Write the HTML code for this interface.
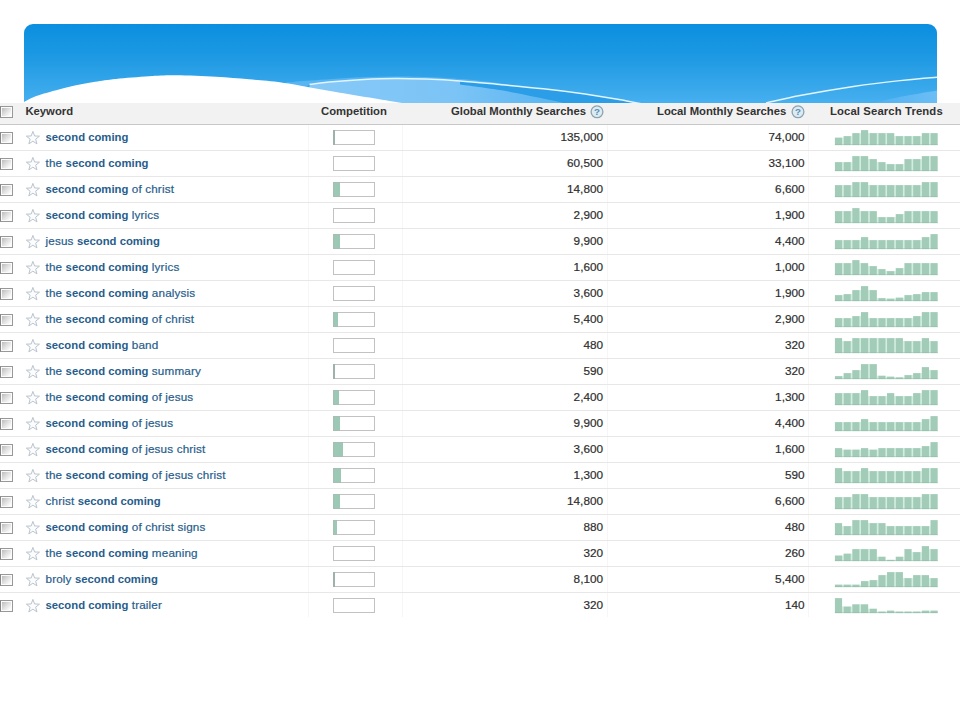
<!DOCTYPE html><html><head><meta charset="utf-8"><title>Keyword Ideas</title><style>
*{margin:0;padding:0;box-sizing:border-box}
html,body{width:960px;height:720px;background:#fff;overflow:hidden}
body{font-family:"Liberation Sans",sans-serif;font-size:11.3px;color:#333;position:relative}
#banner{position:absolute;left:24px;top:24px;width:913px;height:84px;border-radius:9px 9px 0 0;overflow:hidden;
 background:linear-gradient(#0b8fdf 0%,#1e99e3 40%,#45afef 92%)}
#banner svg{position:absolute;left:0;top:0}
#tbl{position:absolute;left:0;top:103px;width:960px;height:517px;background:#fff}
#hd{position:absolute;left:0;top:0;width:960px;height:22px;background:#f2f2f2;border-bottom:1px solid #c8c8c8;font-weight:bold;color:#333}
#hd span{position:absolute;top:1.2px;line-height:14px;white-space:nowrap}
#hd svg{position:absolute;left:0;top:0}
.r{position:absolute;left:0;width:960px;height:26px;border-bottom:1px solid #e7e7e7}
.r span{position:absolute;line-height:14px;white-space:nowrap}
.k{left:45.5px;top:4.9px;color:#265d8c;letter-spacing:0.15px;font-size:11.7px;-webkit-text-stroke:0.2px #265d8c}
.k b{font-weight:bold;letter-spacing:0;font-size:11.3px;-webkit-text-stroke:0}
.g,.l{top:4.9px;font-size:11.75px;text-align:right;color:#2e2e2e;-webkit-text-stroke:0.2px #2e2e2e}
.g{right:357px}
.l{right:155.5px}
.cb{position:absolute;left:0;width:13px;height:12.5px;border:1px solid #989898;border-left-color:#858585;background:#fbfbfb;padding:1px}
.cb::after{content:"";display:block;width:9px;height:8.5px;background:linear-gradient(135deg,#bcbcbc,#dedede 45%,#fcfcfc 90%)}
.cp{position:absolute;left:333px;top:5px;width:42px;height:15px;border:1px solid #c2c2c2;background:#fff}
.cp i{position:absolute;left:-1px;top:-1px;height:15px;background:#9cc9b5;border:1px solid #a9bdb5;border-right:0}
.cp i.s{background:#9db2aa;border:0}
.t{position:absolute;left:0;top:0}
.vs{position:absolute;top:22px;width:1px;height:492px;background:#f6f6f6}
</style></head><body>
<div id="banner"><svg width="913" height="84" viewBox="24 24 913 84">
<defs><linearGradient id="lg" x1="0" y1="0" x2="1" y2="0"><stop offset="0" stop-color="#86c9f7"/><stop offset="0.55" stop-color="#7cc4f6"/><stop offset="1" stop-color="#55b3f0"/></linearGradient>
<linearGradient id="lg2" x1="0" y1="0" x2="1" y2="0"><stop offset="0" stop-color="#4fb1f0"/><stop offset="1" stop-color="#6cbef5"/></linearGradient></defs>
<path d="M309.6,84.3 C313.4,83.9 323.5,82.5 332.5,81.7 C341.5,80.9 353.3,80.0 363.7,79.5 C374.1,79.0 384.6,78.6 395.0,78.5 C405.4,78.4 415.2,78.7 426.0,79.1 C436.8,79.5 447.4,80.0 460.0,80.9 C472.6,81.8 487.8,83.4 501.7,84.7 C515.6,86.0 529.4,87.2 543.3,88.8 C557.2,90.3 571.1,92.0 585.0,94.0 C598.9,96.0 616.7,99.2 626.7,100.9 C636.7,102.7 642.0,103.9 645.0,104.5 L645,108 L460,108 Z" fill="#2b9ee7"/>
<path d="M286.0,82.6 C290.0,82.3 302.2,81.2 310.0,80.6 C317.8,80.0 323.6,79.6 332.5,79.0 C341.4,78.4 353.3,77.6 363.7,77.2 C374.1,76.8 384.6,76.4 395.0,76.4 C405.4,76.4 413.5,76.4 426.0,77.0 C438.5,77.6 456.0,78.5 470.0,79.8 C484.0,81.1 503.3,83.8 510.0,84.6 L510.0,84.6 C508.6,84.6 510.0,85.3 501.7,84.7 C493.4,84.1 472.6,81.8 460.0,80.9 C447.4,80.0 436.8,79.5 426.0,79.1 C415.2,78.7 405.4,78.4 395.0,78.5 C384.6,78.6 374.1,79.0 363.7,79.5 C353.3,80.0 341.5,80.9 332.5,81.7 C323.5,82.5 313.4,83.9 309.6,84.3 L300,92 L286,92 Z" fill="#58b5f1"/>
<path d="M309.6,84.3 C313.4,83.9 323.5,82.5 332.5,81.7 C341.5,80.9 353.3,80.0 363.7,79.5 C374.1,79.0 384.6,78.6 395.0,78.5 C405.4,78.4 415.2,78.7 426.0,79.1 C436.8,79.5 454.3,80.6 460.0,80.9 L460.0,84.4 C466.9,85.4 487.9,88.0 501.7,90.3 C515.5,92.6 532.8,96.4 543.0,98.5 C553.2,100.6 558.2,101.8 563.0,103.0 C567.8,104.2 570.5,105.5 572.0,106.0 L309,108 Z" fill="url(#lg)"/>
<path d="M309.6,84.3 C313.4,83.9 323.5,82.5 332.5,81.7 C341.5,80.9 353.3,80.0 363.7,79.5 C374.1,79.0 384.6,78.6 395.0,78.5 C405.4,78.4 415.2,78.7 426.0,79.1 C436.8,79.5 447.4,80.0 460.0,80.9 C472.6,81.8 487.8,83.4 501.7,84.7 C515.6,86.0 529.4,87.2 543.3,88.8 C557.2,90.3 571.1,92.0 585.0,94.0 C598.9,96.0 616.7,99.2 626.7,100.9 C636.7,102.7 642.0,103.9 645.0,104.5" fill="none" stroke="#e4f4fd" stroke-width="1.5"/>
<path d="M873.0,103.0 C878.3,101.8 894.3,98.1 905.0,96.0 C915.7,93.9 931.7,91.3 937.0,90.4 L937,108 L873,108 Z" fill="url(#lg2)"/>
<path d="M766.0,103.0 C771.7,101.8 785.2,98.3 800.0,95.5 C814.8,92.7 838.3,88.7 855.0,86.2 C871.7,83.7 886.3,82.1 900.0,80.6 C913.7,79.1 930.8,77.8 937.0,77.3" fill="none" stroke="#e4f4fd" stroke-width="1.4"/>
<path d="M24.0,101.9 C25.3,101.2 28.8,99.2 31.6,97.9 C34.4,96.7 38.4,95.2 41.0,94.4 C43.6,93.6 44.1,93.7 47.2,92.8 C50.4,91.9 55.0,90.5 59.8,89.3 C64.5,88.0 70.1,86.5 76.0,85.3 C81.9,84.0 88.3,82.9 95.0,81.8 C101.7,80.7 107.0,79.8 116.0,78.9 C125.0,78.0 139.0,76.8 149.0,76.2 C159.0,75.6 164.8,75.2 176.0,75.3 C187.2,75.4 203.8,76.0 216.0,76.7 C228.2,77.4 237.9,78.3 249.0,79.3 C260.1,80.3 268.2,80.6 282.7,82.7 C297.2,84.8 316.6,88.7 336.0,92.0 C355.4,95.3 385.0,100.2 399.0,102.5 C413.0,104.8 416.5,105.4 420.0,106.0 L24,108 Z" fill="#fff"/>
</svg></div>
<div id="tbl">
<div id="hd"><div class="cb" style="top:2.8px"></div><svg width="960" height="22"><circle cx="597" cy="8.8" r="5.9" fill="#dcebf2" stroke="#8ba3b1" stroke-width="1.3"/><text x="597" y="12.100000000000001" font-family="Liberation Sans, sans-serif" font-size="9.8" font-weight="bold" fill="#5b8fb5" text-anchor="middle">?</text><circle cx="798" cy="8.8" r="5.9" fill="#dcebf2" stroke="#8ba3b1" stroke-width="1.3"/><text x="798" y="12.100000000000001" font-family="Liberation Sans, sans-serif" font-size="9.8" font-weight="bold" fill="#5b8fb5" text-anchor="middle">?</text></svg><span style="left:25.4px">Keyword</span><span style="left:321px">Competition</span><span style="left:451px">Global Monthly Searches</span><span style="left:657px">Local Monthly Searches</span><span style="left:830px;letter-spacing:0.12px">Local Search Trends</span></div>
<div class="vs" style="left:307.6px"></div>
<div class="vs" style="left:402px"></div>
<div class="vs" style="left:607px"></div>
<div class="vs" style="left:808px"></div>
<div class="r" style="top:22px"><div class="cb" style="top:6.7px"></div><svg class="t" width="960" height="26"><path d="M32.90,6.40 L34.60,10.96 L39.46,11.17 L35.66,14.20 L36.96,18.88 L32.90,16.20 L28.84,18.88 L30.14,14.20 L26.34,11.17 L31.20,10.96 Z" fill="#fafcfe" stroke="#bcc4cc" stroke-width="1"/><g fill="#d0efe1"><rect x="841.90" y="12.6" width="1.7" height="7.5"/><rect x="850.59" y="11.1" width="1.7" height="9"/><rect x="859.28" y="8.1" width="1.7" height="12"/><rect x="867.97" y="8.1" width="1.7" height="12"/><rect x="876.66" y="8.1" width="1.7" height="12"/><rect x="885.35" y="8.1" width="1.7" height="12"/><rect x="894.04" y="11.1" width="1.7" height="9"/><rect x="902.73" y="11.1" width="1.7" height="9"/><rect x="911.42" y="11.1" width="1.7" height="9"/><rect x="920.11" y="11.1" width="1.7" height="9"/><rect x="928.80" y="8.1" width="1.7" height="12"/></g><g fill="#a2ccb8"><rect x="834.90" y="12.6" width="7.2" height="7.5"/><rect x="843.59" y="11.1" width="7.2" height="9"/><rect x="852.28" y="8.1" width="7.2" height="12"/><rect x="860.97" y="5.1" width="7.2" height="15"/><rect x="869.66" y="8.1" width="7.2" height="12"/><rect x="878.35" y="8.1" width="7.2" height="12"/><rect x="887.04" y="8.1" width="7.2" height="12"/><rect x="895.73" y="11.1" width="7.2" height="9"/><rect x="904.42" y="11.1" width="7.2" height="9"/><rect x="913.11" y="11.1" width="7.2" height="9"/><rect x="921.80" y="8.1" width="7.2" height="12"/><rect x="930.49" y="8.1" width="7.2" height="12"/></g><rect x="834.9" y="19.1" width="102.8" height="1" fill="#8fb5a3" opacity="0.45"/></svg><span class="k"><b>second coming</b></span><div class="cp"><i class="s" style="width:1.5px"></i></div><span class="g">135,000</span><span class="l">74,000</span></div>
<div class="r" style="top:48px"><div class="cb" style="top:6.7px"></div><svg class="t" width="960" height="26"><path d="M32.90,6.40 L34.60,10.96 L39.46,11.17 L35.66,14.20 L36.96,18.88 L32.90,16.20 L28.84,18.88 L30.14,14.20 L26.34,11.17 L31.20,10.96 Z" fill="#fafcfe" stroke="#bcc4cc" stroke-width="1"/><g fill="#d0efe1"><rect x="841.90" y="11.1" width="1.7" height="9"/><rect x="850.59" y="11.1" width="1.7" height="9"/><rect x="859.28" y="5.1" width="1.7" height="15"/><rect x="867.97" y="8.1" width="1.7" height="12"/><rect x="876.66" y="11.1" width="1.7" height="9"/><rect x="885.35" y="13.1" width="1.7" height="7"/><rect x="894.04" y="13.1" width="1.7" height="7"/><rect x="902.73" y="13.1" width="1.7" height="7"/><rect x="911.42" y="8.1" width="1.7" height="12"/><rect x="920.11" y="8.1" width="1.7" height="12"/><rect x="928.80" y="5.1" width="1.7" height="15"/></g><g fill="#a2ccb8"><rect x="834.90" y="11.1" width="7.2" height="9"/><rect x="843.59" y="11.1" width="7.2" height="9"/><rect x="852.28" y="5.1" width="7.2" height="15"/><rect x="860.97" y="5.1" width="7.2" height="15"/><rect x="869.66" y="8.1" width="7.2" height="12"/><rect x="878.35" y="11.1" width="7.2" height="9"/><rect x="887.04" y="13.1" width="7.2" height="7"/><rect x="895.73" y="13.1" width="7.2" height="7"/><rect x="904.42" y="8.1" width="7.2" height="12"/><rect x="913.11" y="8.1" width="7.2" height="12"/><rect x="921.80" y="5.1" width="7.2" height="15"/><rect x="930.49" y="5.1" width="7.2" height="15"/></g><rect x="834.9" y="19.1" width="102.8" height="1" fill="#8fb5a3" opacity="0.45"/></svg><span class="k">the <b>second coming</b></span><div class="cp"></div><span class="g">60,500</span><span class="l">33,100</span></div>
<div class="r" style="top:74px"><div class="cb" style="top:6.7px"></div><svg class="t" width="960" height="26"><path d="M32.90,6.40 L34.60,10.96 L39.46,11.17 L35.66,14.20 L36.96,18.88 L32.90,16.20 L28.84,18.88 L30.14,14.20 L26.34,11.17 L31.20,10.96 Z" fill="#fafcfe" stroke="#bcc4cc" stroke-width="1"/><g fill="#d0efe1"><rect x="841.90" y="8.1" width="1.7" height="12"/><rect x="850.59" y="8.1" width="1.7" height="12"/><rect x="859.28" y="5.1" width="1.7" height="15"/><rect x="867.97" y="8.1" width="1.7" height="12"/><rect x="876.66" y="8.1" width="1.7" height="12"/><rect x="885.35" y="8.1" width="1.7" height="12"/><rect x="894.04" y="8.1" width="1.7" height="12"/><rect x="902.73" y="8.1" width="1.7" height="12"/><rect x="911.42" y="8.1" width="1.7" height="12"/><rect x="920.11" y="8.1" width="1.7" height="12"/><rect x="928.80" y="5.1" width="1.7" height="15"/></g><g fill="#a2ccb8"><rect x="834.90" y="8.1" width="7.2" height="12"/><rect x="843.59" y="8.1" width="7.2" height="12"/><rect x="852.28" y="5.1" width="7.2" height="15"/><rect x="860.97" y="5.1" width="7.2" height="15"/><rect x="869.66" y="8.1" width="7.2" height="12"/><rect x="878.35" y="8.1" width="7.2" height="12"/><rect x="887.04" y="8.1" width="7.2" height="12"/><rect x="895.73" y="8.1" width="7.2" height="12"/><rect x="904.42" y="8.1" width="7.2" height="12"/><rect x="913.11" y="8.1" width="7.2" height="12"/><rect x="921.80" y="5.1" width="7.2" height="15"/><rect x="930.49" y="5.1" width="7.2" height="15"/></g><rect x="834.9" y="19.1" width="102.8" height="1" fill="#8fb5a3" opacity="0.45"/></svg><span class="k"><b>second coming</b> of christ</span><div class="cp"><i style="width:7.4px"></i></div><span class="g">14,800</span><span class="l">6,600</span></div>
<div class="r" style="top:100px"><div class="cb" style="top:6.7px"></div><svg class="t" width="960" height="26"><path d="M32.90,6.40 L34.60,10.96 L39.46,11.17 L35.66,14.20 L36.96,18.88 L32.90,16.20 L28.84,18.88 L30.14,14.20 L26.34,11.17 L31.20,10.96 Z" fill="#fafcfe" stroke="#bcc4cc" stroke-width="1"/><g fill="#d0efe1"><rect x="841.90" y="8.1" width="1.7" height="12"/><rect x="850.59" y="8.1" width="1.7" height="12"/><rect x="859.28" y="8.1" width="1.7" height="12"/><rect x="867.97" y="8.1" width="1.7" height="12"/><rect x="876.66" y="14.1" width="1.7" height="6"/><rect x="885.35" y="14.1" width="1.7" height="6"/><rect x="894.04" y="14.1" width="1.7" height="6"/><rect x="902.73" y="11.1" width="1.7" height="9"/><rect x="911.42" y="8.1" width="1.7" height="12"/><rect x="920.11" y="8.1" width="1.7" height="12"/><rect x="928.80" y="8.1" width="1.7" height="12"/></g><g fill="#a2ccb8"><rect x="834.90" y="8.1" width="7.2" height="12"/><rect x="843.59" y="8.1" width="7.2" height="12"/><rect x="852.28" y="5.1" width="7.2" height="15"/><rect x="860.97" y="8.1" width="7.2" height="12"/><rect x="869.66" y="8.1" width="7.2" height="12"/><rect x="878.35" y="14.1" width="7.2" height="6"/><rect x="887.04" y="14.1" width="7.2" height="6"/><rect x="895.73" y="11.1" width="7.2" height="9"/><rect x="904.42" y="8.1" width="7.2" height="12"/><rect x="913.11" y="8.1" width="7.2" height="12"/><rect x="921.80" y="8.1" width="7.2" height="12"/><rect x="930.49" y="8.1" width="7.2" height="12"/></g><rect x="834.9" y="19.1" width="102.8" height="1" fill="#8fb5a3" opacity="0.45"/></svg><span class="k"><b>second coming</b> lyrics</span><div class="cp"></div><span class="g">2,900</span><span class="l">1,900</span></div>
<div class="r" style="top:126px"><div class="cb" style="top:6.7px"></div><svg class="t" width="960" height="26"><path d="M32.90,6.40 L34.60,10.96 L39.46,11.17 L35.66,14.20 L36.96,18.88 L32.90,16.20 L28.84,18.88 L30.14,14.20 L26.34,11.17 L31.20,10.96 Z" fill="#fafcfe" stroke="#bcc4cc" stroke-width="1"/><g fill="#d0efe1"><rect x="841.90" y="11.1" width="1.7" height="9"/><rect x="850.59" y="11.1" width="1.7" height="9"/><rect x="859.28" y="11.1" width="1.7" height="9"/><rect x="867.97" y="11.1" width="1.7" height="9"/><rect x="876.66" y="11.1" width="1.7" height="9"/><rect x="885.35" y="11.1" width="1.7" height="9"/><rect x="894.04" y="11.1" width="1.7" height="9"/><rect x="902.73" y="11.1" width="1.7" height="9"/><rect x="911.42" y="11.1" width="1.7" height="9"/><rect x="920.11" y="11.1" width="1.7" height="9"/><rect x="928.80" y="8.1" width="1.7" height="12"/></g><g fill="#a2ccb8"><rect x="834.90" y="11.1" width="7.2" height="9"/><rect x="843.59" y="11.1" width="7.2" height="9"/><rect x="852.28" y="11.1" width="7.2" height="9"/><rect x="860.97" y="8.1" width="7.2" height="12"/><rect x="869.66" y="11.1" width="7.2" height="9"/><rect x="878.35" y="11.1" width="7.2" height="9"/><rect x="887.04" y="11.1" width="7.2" height="9"/><rect x="895.73" y="11.1" width="7.2" height="9"/><rect x="904.42" y="11.1" width="7.2" height="9"/><rect x="913.11" y="11.1" width="7.2" height="9"/><rect x="921.80" y="8.1" width="7.2" height="12"/><rect x="930.49" y="5.1" width="7.2" height="15"/></g><rect x="834.9" y="19.1" width="102.8" height="1" fill="#8fb5a3" opacity="0.45"/></svg><span class="k">jesus <b>second coming</b></span><div class="cp"><i style="width:7.4px"></i></div><span class="g">9,900</span><span class="l">4,400</span></div>
<div class="r" style="top:152px"><div class="cb" style="top:6.7px"></div><svg class="t" width="960" height="26"><path d="M32.90,6.40 L34.60,10.96 L39.46,11.17 L35.66,14.20 L36.96,18.88 L32.90,16.20 L28.84,18.88 L30.14,14.20 L26.34,11.17 L31.20,10.96 Z" fill="#fafcfe" stroke="#bcc4cc" stroke-width="1"/><g fill="#d0efe1"><rect x="841.90" y="8.1" width="1.7" height="12"/><rect x="850.59" y="8.1" width="1.7" height="12"/><rect x="859.28" y="8.1" width="1.7" height="12"/><rect x="867.97" y="11.1" width="1.7" height="9"/><rect x="876.66" y="14.1" width="1.7" height="6"/><rect x="885.35" y="16.1" width="1.7" height="4"/><rect x="894.04" y="16.1" width="1.7" height="4"/><rect x="902.73" y="13.1" width="1.7" height="7"/><rect x="911.42" y="8.1" width="1.7" height="12"/><rect x="920.11" y="8.1" width="1.7" height="12"/><rect x="928.80" y="8.1" width="1.7" height="12"/></g><g fill="#a2ccb8"><rect x="834.90" y="8.1" width="7.2" height="12"/><rect x="843.59" y="8.1" width="7.2" height="12"/><rect x="852.28" y="5.1" width="7.2" height="15"/><rect x="860.97" y="8.1" width="7.2" height="12"/><rect x="869.66" y="11.1" width="7.2" height="9"/><rect x="878.35" y="14.1" width="7.2" height="6"/><rect x="887.04" y="16.1" width="7.2" height="4"/><rect x="895.73" y="13.1" width="7.2" height="7"/><rect x="904.42" y="8.1" width="7.2" height="12"/><rect x="913.11" y="8.1" width="7.2" height="12"/><rect x="921.80" y="8.1" width="7.2" height="12"/><rect x="930.49" y="8.1" width="7.2" height="12"/></g><rect x="834.9" y="19.1" width="102.8" height="1" fill="#8fb5a3" opacity="0.45"/></svg><span class="k">the <b>second coming</b> lyrics</span><div class="cp"></div><span class="g">1,600</span><span class="l">1,000</span></div>
<div class="r" style="top:178px"><div class="cb" style="top:6.7px"></div><svg class="t" width="960" height="26"><path d="M32.90,6.40 L34.60,10.96 L39.46,11.17 L35.66,14.20 L36.96,18.88 L32.90,16.20 L28.84,18.88 L30.14,14.20 L26.34,11.17 L31.20,10.96 Z" fill="#fafcfe" stroke="#bcc4cc" stroke-width="1"/><g fill="#d0efe1"><rect x="841.90" y="14.1" width="1.7" height="6"/><rect x="850.59" y="13.1" width="1.7" height="7"/><rect x="859.28" y="9.1" width="1.7" height="11"/><rect x="867.97" y="9.1" width="1.7" height="11"/><rect x="876.66" y="17.1" width="1.7" height="3"/><rect x="885.35" y="17.6" width="1.7" height="2.5"/><rect x="894.04" y="17.6" width="1.7" height="2.5"/><rect x="902.73" y="16.6" width="1.7" height="3.5"/><rect x="911.42" y="14.1" width="1.7" height="6"/><rect x="920.11" y="13.1" width="1.7" height="7"/><rect x="928.80" y="11.1" width="1.7" height="9"/></g><g fill="#a2ccb8"><rect x="834.90" y="14.1" width="7.2" height="6"/><rect x="843.59" y="13.1" width="7.2" height="7"/><rect x="852.28" y="9.1" width="7.2" height="11"/><rect x="860.97" y="5.1" width="7.2" height="15"/><rect x="869.66" y="9.1" width="7.2" height="11"/><rect x="878.35" y="17.1" width="7.2" height="3"/><rect x="887.04" y="17.6" width="7.2" height="2.5"/><rect x="895.73" y="16.6" width="7.2" height="3.5"/><rect x="904.42" y="14.1" width="7.2" height="6"/><rect x="913.11" y="13.1" width="7.2" height="7"/><rect x="921.80" y="11.1" width="7.2" height="9"/><rect x="930.49" y="11.1" width="7.2" height="9"/></g><rect x="834.9" y="19.1" width="102.8" height="1" fill="#8fb5a3" opacity="0.45"/></svg><span class="k">the <b>second coming</b> analysis</span><div class="cp"></div><span class="g">3,600</span><span class="l">1,900</span></div>
<div class="r" style="top:204px"><div class="cb" style="top:6.7px"></div><svg class="t" width="960" height="26"><path d="M32.90,6.40 L34.60,10.96 L39.46,11.17 L35.66,14.20 L36.96,18.88 L32.90,16.20 L28.84,18.88 L30.14,14.20 L26.34,11.17 L31.20,10.96 Z" fill="#fafcfe" stroke="#bcc4cc" stroke-width="1"/><g fill="#d0efe1"><rect x="841.90" y="11.1" width="1.7" height="9"/><rect x="850.59" y="11.1" width="1.7" height="9"/><rect x="859.28" y="9.1" width="1.7" height="11"/><rect x="867.97" y="11.1" width="1.7" height="9"/><rect x="876.66" y="11.1" width="1.7" height="9"/><rect x="885.35" y="11.1" width="1.7" height="9"/><rect x="894.04" y="11.1" width="1.7" height="9"/><rect x="902.73" y="11.1" width="1.7" height="9"/><rect x="911.42" y="11.1" width="1.7" height="9"/><rect x="920.11" y="9.1" width="1.7" height="11"/><rect x="928.80" y="5.1" width="1.7" height="15"/></g><g fill="#a2ccb8"><rect x="834.90" y="11.1" width="7.2" height="9"/><rect x="843.59" y="11.1" width="7.2" height="9"/><rect x="852.28" y="9.1" width="7.2" height="11"/><rect x="860.97" y="5.1" width="7.2" height="15"/><rect x="869.66" y="11.1" width="7.2" height="9"/><rect x="878.35" y="11.1" width="7.2" height="9"/><rect x="887.04" y="11.1" width="7.2" height="9"/><rect x="895.73" y="11.1" width="7.2" height="9"/><rect x="904.42" y="11.1" width="7.2" height="9"/><rect x="913.11" y="9.1" width="7.2" height="11"/><rect x="921.80" y="5.1" width="7.2" height="15"/><rect x="930.49" y="5.1" width="7.2" height="15"/></g><rect x="834.9" y="19.1" width="102.8" height="1" fill="#8fb5a3" opacity="0.45"/></svg><span class="k">the <b>second coming</b> of christ</span><div class="cp"><i style="width:5.2px"></i></div><span class="g">5,400</span><span class="l">2,900</span></div>
<div class="r" style="top:230px"><div class="cb" style="top:6.7px"></div><svg class="t" width="960" height="26"><path d="M32.90,6.40 L34.60,10.96 L39.46,11.17 L35.66,14.20 L36.96,18.88 L32.90,16.20 L28.84,18.88 L30.14,14.20 L26.34,11.17 L31.20,10.96 Z" fill="#fafcfe" stroke="#bcc4cc" stroke-width="1"/><g fill="#d0efe1"><rect x="841.90" y="8.1" width="1.7" height="12"/><rect x="850.59" y="8.1" width="1.7" height="12"/><rect x="859.28" y="5.1" width="1.7" height="15"/><rect x="867.97" y="5.1" width="1.7" height="15"/><rect x="876.66" y="5.1" width="1.7" height="15"/><rect x="885.35" y="5.1" width="1.7" height="15"/><rect x="894.04" y="5.1" width="1.7" height="15"/><rect x="902.73" y="8.1" width="1.7" height="12"/><rect x="911.42" y="8.1" width="1.7" height="12"/><rect x="920.11" y="8.1" width="1.7" height="12"/><rect x="928.80" y="8.1" width="1.7" height="12"/></g><g fill="#a2ccb8"><rect x="834.90" y="5.1" width="7.2" height="15"/><rect x="843.59" y="8.1" width="7.2" height="12"/><rect x="852.28" y="5.1" width="7.2" height="15"/><rect x="860.97" y="5.1" width="7.2" height="15"/><rect x="869.66" y="5.1" width="7.2" height="15"/><rect x="878.35" y="5.1" width="7.2" height="15"/><rect x="887.04" y="5.1" width="7.2" height="15"/><rect x="895.73" y="5.1" width="7.2" height="15"/><rect x="904.42" y="8.1" width="7.2" height="12"/><rect x="913.11" y="8.1" width="7.2" height="12"/><rect x="921.80" y="5.1" width="7.2" height="15"/><rect x="930.49" y="8.1" width="7.2" height="12"/></g><rect x="834.9" y="19.1" width="102.8" height="1" fill="#8fb5a3" opacity="0.45"/></svg><span class="k"><b>second coming</b> band</span><div class="cp"></div><span class="g">480</span><span class="l">320</span></div>
<div class="r" style="top:256px"><div class="cb" style="top:6.7px"></div><svg class="t" width="960" height="26"><path d="M32.90,6.40 L34.60,10.96 L39.46,11.17 L35.66,14.20 L36.96,18.88 L32.90,16.20 L28.84,18.88 L30.14,14.20 L26.34,11.17 L31.20,10.96 Z" fill="#fafcfe" stroke="#bcc4cc" stroke-width="1"/><g fill="#d0efe1"><rect x="841.90" y="17.1" width="1.7" height="3"/><rect x="850.59" y="14.1" width="1.7" height="6"/><rect x="859.28" y="11.1" width="1.7" height="9"/><rect x="867.97" y="5.1" width="1.7" height="15"/><rect x="876.66" y="16.7" width="1.7" height="3.4"/><rect x="885.35" y="17.6" width="1.7" height="2.5"/><rect x="894.04" y="18.3" width="1.7" height="1.8"/><rect x="902.73" y="18.3" width="1.7" height="1.8"/><rect x="911.42" y="16.1" width="1.7" height="4"/><rect x="920.11" y="14.1" width="1.7" height="6"/><rect x="928.80" y="11.1" width="1.7" height="9"/></g><g fill="#a2ccb8"><rect x="834.90" y="17.1" width="7.2" height="3"/><rect x="843.59" y="14.1" width="7.2" height="6"/><rect x="852.28" y="11.1" width="7.2" height="9"/><rect x="860.97" y="5.1" width="7.2" height="15"/><rect x="869.66" y="5.1" width="7.2" height="15"/><rect x="878.35" y="16.7" width="7.2" height="3.4"/><rect x="887.04" y="17.6" width="7.2" height="2.5"/><rect x="895.73" y="18.3" width="7.2" height="1.8"/><rect x="904.42" y="16.1" width="7.2" height="4"/><rect x="913.11" y="14.1" width="7.2" height="6"/><rect x="921.80" y="8.1" width="7.2" height="12"/><rect x="930.49" y="11.1" width="7.2" height="9"/></g><rect x="834.9" y="19.1" width="102.8" height="1" fill="#8fb5a3" opacity="0.45"/></svg><span class="k">the <b>second coming</b> summary</span><div class="cp"><i class="s" style="width:1.5px"></i></div><span class="g">590</span><span class="l">320</span></div>
<div class="r" style="top:282px"><div class="cb" style="top:6.7px"></div><svg class="t" width="960" height="26"><path d="M32.90,6.40 L34.60,10.96 L39.46,11.17 L35.66,14.20 L36.96,18.88 L32.90,16.20 L28.84,18.88 L30.14,14.20 L26.34,11.17 L31.20,10.96 Z" fill="#fafcfe" stroke="#bcc4cc" stroke-width="1"/><g fill="#d0efe1"><rect x="841.90" y="8.1" width="1.7" height="12"/><rect x="850.59" y="8.1" width="1.7" height="12"/><rect x="859.28" y="8.1" width="1.7" height="12"/><rect x="867.97" y="11.1" width="1.7" height="9"/><rect x="876.66" y="11.1" width="1.7" height="9"/><rect x="885.35" y="11.1" width="1.7" height="9"/><rect x="894.04" y="11.1" width="1.7" height="9"/><rect x="902.73" y="11.1" width="1.7" height="9"/><rect x="911.42" y="11.1" width="1.7" height="9"/><rect x="920.11" y="8.1" width="1.7" height="12"/><rect x="928.80" y="5.1" width="1.7" height="15"/></g><g fill="#a2ccb8"><rect x="834.90" y="8.1" width="7.2" height="12"/><rect x="843.59" y="8.1" width="7.2" height="12"/><rect x="852.28" y="8.1" width="7.2" height="12"/><rect x="860.97" y="5.1" width="7.2" height="15"/><rect x="869.66" y="11.1" width="7.2" height="9"/><rect x="878.35" y="11.1" width="7.2" height="9"/><rect x="887.04" y="8.1" width="7.2" height="12"/><rect x="895.73" y="11.1" width="7.2" height="9"/><rect x="904.42" y="11.1" width="7.2" height="9"/><rect x="913.11" y="8.1" width="7.2" height="12"/><rect x="921.80" y="5.1" width="7.2" height="15"/><rect x="930.49" y="5.1" width="7.2" height="15"/></g><rect x="834.9" y="19.1" width="102.8" height="1" fill="#8fb5a3" opacity="0.45"/></svg><span class="k">the <b>second coming</b> of jesus</span><div class="cp"><i style="width:5.8px"></i></div><span class="g">2,400</span><span class="l">1,300</span></div>
<div class="r" style="top:308px"><div class="cb" style="top:6.7px"></div><svg class="t" width="960" height="26"><path d="M32.90,6.40 L34.60,10.96 L39.46,11.17 L35.66,14.20 L36.96,18.88 L32.90,16.20 L28.84,18.88 L30.14,14.20 L26.34,11.17 L31.20,10.96 Z" fill="#fafcfe" stroke="#bcc4cc" stroke-width="1"/><g fill="#d0efe1"><rect x="841.90" y="11.1" width="1.7" height="9"/><rect x="850.59" y="11.1" width="1.7" height="9"/><rect x="859.28" y="11.1" width="1.7" height="9"/><rect x="867.97" y="11.1" width="1.7" height="9"/><rect x="876.66" y="11.1" width="1.7" height="9"/><rect x="885.35" y="11.1" width="1.7" height="9"/><rect x="894.04" y="11.1" width="1.7" height="9"/><rect x="902.73" y="11.1" width="1.7" height="9"/><rect x="911.42" y="11.1" width="1.7" height="9"/><rect x="920.11" y="11.1" width="1.7" height="9"/><rect x="928.80" y="8.1" width="1.7" height="12"/></g><g fill="#a2ccb8"><rect x="834.90" y="11.1" width="7.2" height="9"/><rect x="843.59" y="11.1" width="7.2" height="9"/><rect x="852.28" y="11.1" width="7.2" height="9"/><rect x="860.97" y="8.1" width="7.2" height="12"/><rect x="869.66" y="11.1" width="7.2" height="9"/><rect x="878.35" y="11.1" width="7.2" height="9"/><rect x="887.04" y="11.1" width="7.2" height="9"/><rect x="895.73" y="11.1" width="7.2" height="9"/><rect x="904.42" y="11.1" width="7.2" height="9"/><rect x="913.11" y="11.1" width="7.2" height="9"/><rect x="921.80" y="8.1" width="7.2" height="12"/><rect x="930.49" y="5.1" width="7.2" height="15"/></g><rect x="834.9" y="19.1" width="102.8" height="1" fill="#8fb5a3" opacity="0.45"/></svg><span class="k"><b>second coming</b> of jesus</span><div class="cp"><i style="width:7.4px"></i></div><span class="g">9,900</span><span class="l">4,400</span></div>
<div class="r" style="top:334px"><div class="cb" style="top:6.7px"></div><svg class="t" width="960" height="26"><path d="M32.90,6.40 L34.60,10.96 L39.46,11.17 L35.66,14.20 L36.96,18.88 L32.90,16.20 L28.84,18.88 L30.14,14.20 L26.34,11.17 L31.20,10.96 Z" fill="#fafcfe" stroke="#bcc4cc" stroke-width="1"/><g fill="#d0efe1"><rect x="841.90" y="12.6" width="1.7" height="7.5"/><rect x="850.59" y="12.6" width="1.7" height="7.5"/><rect x="859.28" y="12.6" width="1.7" height="7.5"/><rect x="867.97" y="12.6" width="1.7" height="7.5"/><rect x="876.66" y="12.6" width="1.7" height="7.5"/><rect x="885.35" y="11.1" width="1.7" height="9"/><rect x="894.04" y="11.1" width="1.7" height="9"/><rect x="902.73" y="11.1" width="1.7" height="9"/><rect x="911.42" y="11.1" width="1.7" height="9"/><rect x="920.11" y="11.1" width="1.7" height="9"/><rect x="928.80" y="9.1" width="1.7" height="11"/></g><g fill="#a2ccb8"><rect x="834.90" y="11.1" width="7.2" height="9"/><rect x="843.59" y="12.6" width="7.2" height="7.5"/><rect x="852.28" y="12.6" width="7.2" height="7.5"/><rect x="860.97" y="11.1" width="7.2" height="9"/><rect x="869.66" y="12.6" width="7.2" height="7.5"/><rect x="878.35" y="11.1" width="7.2" height="9"/><rect x="887.04" y="11.1" width="7.2" height="9"/><rect x="895.73" y="11.1" width="7.2" height="9"/><rect x="904.42" y="11.1" width="7.2" height="9"/><rect x="913.11" y="11.1" width="7.2" height="9"/><rect x="921.80" y="9.1" width="7.2" height="11"/><rect x="930.49" y="5.1" width="7.2" height="15"/></g><rect x="834.9" y="19.1" width="102.8" height="1" fill="#8fb5a3" opacity="0.45"/></svg><span class="k"><b>second coming</b> of jesus christ</span><div class="cp"><i style="width:10.0px"></i></div><span class="g">3,600</span><span class="l">1,600</span></div>
<div class="r" style="top:360px"><div class="cb" style="top:6.7px"></div><svg class="t" width="960" height="26"><path d="M32.90,6.40 L34.60,10.96 L39.46,11.17 L35.66,14.20 L36.96,18.88 L32.90,16.20 L28.84,18.88 L30.14,14.20 L26.34,11.17 L31.20,10.96 Z" fill="#fafcfe" stroke="#bcc4cc" stroke-width="1"/><g fill="#d0efe1"><rect x="841.90" y="8.1" width="1.7" height="12"/><rect x="850.59" y="8.1" width="1.7" height="12"/><rect x="859.28" y="8.1" width="1.7" height="12"/><rect x="867.97" y="8.1" width="1.7" height="12"/><rect x="876.66" y="8.1" width="1.7" height="12"/><rect x="885.35" y="8.1" width="1.7" height="12"/><rect x="894.04" y="8.1" width="1.7" height="12"/><rect x="902.73" y="8.1" width="1.7" height="12"/><rect x="911.42" y="8.1" width="1.7" height="12"/><rect x="920.11" y="8.1" width="1.7" height="12"/><rect x="928.80" y="5.1" width="1.7" height="15"/></g><g fill="#a2ccb8"><rect x="834.90" y="5.1" width="7.2" height="15"/><rect x="843.59" y="8.1" width="7.2" height="12"/><rect x="852.28" y="8.1" width="7.2" height="12"/><rect x="860.97" y="5.1" width="7.2" height="15"/><rect x="869.66" y="8.1" width="7.2" height="12"/><rect x="878.35" y="8.1" width="7.2" height="12"/><rect x="887.04" y="8.1" width="7.2" height="12"/><rect x="895.73" y="8.1" width="7.2" height="12"/><rect x="904.42" y="8.1" width="7.2" height="12"/><rect x="913.11" y="8.1" width="7.2" height="12"/><rect x="921.80" y="5.1" width="7.2" height="15"/><rect x="930.49" y="5.1" width="7.2" height="15"/></g><rect x="834.9" y="19.1" width="102.8" height="1" fill="#8fb5a3" opacity="0.45"/></svg><span class="k">the <b>second coming</b> of jesus christ</span><div class="cp"><i style="width:8.4px"></i></div><span class="g">1,300</span><span class="l">590</span></div>
<div class="r" style="top:386px"><div class="cb" style="top:6.7px"></div><svg class="t" width="960" height="26"><path d="M32.90,6.40 L34.60,10.96 L39.46,11.17 L35.66,14.20 L36.96,18.88 L32.90,16.20 L28.84,18.88 L30.14,14.20 L26.34,11.17 L31.20,10.96 Z" fill="#fafcfe" stroke="#bcc4cc" stroke-width="1"/><g fill="#d0efe1"><rect x="841.90" y="8.1" width="1.7" height="12"/><rect x="850.59" y="8.1" width="1.7" height="12"/><rect x="859.28" y="5.1" width="1.7" height="15"/><rect x="867.97" y="8.1" width="1.7" height="12"/><rect x="876.66" y="8.1" width="1.7" height="12"/><rect x="885.35" y="8.1" width="1.7" height="12"/><rect x="894.04" y="8.1" width="1.7" height="12"/><rect x="902.73" y="8.1" width="1.7" height="12"/><rect x="911.42" y="8.1" width="1.7" height="12"/><rect x="920.11" y="8.1" width="1.7" height="12"/><rect x="928.80" y="5.1" width="1.7" height="15"/></g><g fill="#a2ccb8"><rect x="834.90" y="8.1" width="7.2" height="12"/><rect x="843.59" y="8.1" width="7.2" height="12"/><rect x="852.28" y="5.1" width="7.2" height="15"/><rect x="860.97" y="5.1" width="7.2" height="15"/><rect x="869.66" y="8.1" width="7.2" height="12"/><rect x="878.35" y="8.1" width="7.2" height="12"/><rect x="887.04" y="8.1" width="7.2" height="12"/><rect x="895.73" y="8.1" width="7.2" height="12"/><rect x="904.42" y="8.1" width="7.2" height="12"/><rect x="913.11" y="8.1" width="7.2" height="12"/><rect x="921.80" y="5.1" width="7.2" height="15"/><rect x="930.49" y="5.1" width="7.2" height="15"/></g><rect x="834.9" y="19.1" width="102.8" height="1" fill="#8fb5a3" opacity="0.45"/></svg><span class="k">christ <b>second coming</b></span><div class="cp"><i style="width:7.2px"></i></div><span class="g">14,800</span><span class="l">6,600</span></div>
<div class="r" style="top:412px"><div class="cb" style="top:6.7px"></div><svg class="t" width="960" height="26"><path d="M32.90,6.40 L34.60,10.96 L39.46,11.17 L35.66,14.20 L36.96,18.88 L32.90,16.20 L28.84,18.88 L30.14,14.20 L26.34,11.17 L31.20,10.96 Z" fill="#fafcfe" stroke="#bcc4cc" stroke-width="1"/><g fill="#d0efe1"><rect x="841.90" y="11.1" width="1.7" height="9"/><rect x="850.59" y="11.1" width="1.7" height="9"/><rect x="859.28" y="5.1" width="1.7" height="15"/><rect x="867.97" y="8.1" width="1.7" height="12"/><rect x="876.66" y="8.1" width="1.7" height="12"/><rect x="885.35" y="11.1" width="1.7" height="9"/><rect x="894.04" y="11.1" width="1.7" height="9"/><rect x="902.73" y="11.1" width="1.7" height="9"/><rect x="911.42" y="11.1" width="1.7" height="9"/><rect x="920.11" y="11.1" width="1.7" height="9"/><rect x="928.80" y="11.1" width="1.7" height="9"/></g><g fill="#a2ccb8"><rect x="834.90" y="8.1" width="7.2" height="12"/><rect x="843.59" y="11.1" width="7.2" height="9"/><rect x="852.28" y="5.1" width="7.2" height="15"/><rect x="860.97" y="5.1" width="7.2" height="15"/><rect x="869.66" y="8.1" width="7.2" height="12"/><rect x="878.35" y="8.1" width="7.2" height="12"/><rect x="887.04" y="11.1" width="7.2" height="9"/><rect x="895.73" y="11.1" width="7.2" height="9"/><rect x="904.42" y="11.1" width="7.2" height="9"/><rect x="913.11" y="11.1" width="7.2" height="9"/><rect x="921.80" y="11.1" width="7.2" height="9"/><rect x="930.49" y="5.1" width="7.2" height="15"/></g><rect x="834.9" y="19.1" width="102.8" height="1" fill="#8fb5a3" opacity="0.45"/></svg><span class="k"><b>second coming</b> of christ signs</span><div class="cp"><i style="width:4.0px"></i></div><span class="g">880</span><span class="l">480</span></div>
<div class="r" style="top:438px"><div class="cb" style="top:6.7px"></div><svg class="t" width="960" height="26"><path d="M32.90,6.40 L34.60,10.96 L39.46,11.17 L35.66,14.20 L36.96,18.88 L32.90,16.20 L28.84,18.88 L30.14,14.20 L26.34,11.17 L31.20,10.96 Z" fill="#fafcfe" stroke="#bcc4cc" stroke-width="1"/><g fill="#d0efe1"><rect x="841.90" y="14.5" width="1.7" height="5.6"/><rect x="850.59" y="12.6" width="1.7" height="7.5"/><rect x="859.28" y="8.1" width="1.7" height="12"/><rect x="867.97" y="8.1" width="1.7" height="12"/><rect x="876.66" y="15.7" width="1.7" height="4.4"/><rect x="885.35" y="18.8" width="1.7" height="1.3"/><rect x="894.04" y="18.8" width="1.7" height="1.3"/><rect x="902.73" y="15.7" width="1.7" height="4.4"/><rect x="911.42" y="11.1" width="1.7" height="9"/><rect x="920.11" y="11.1" width="1.7" height="9"/><rect x="928.80" y="8.1" width="1.7" height="12"/></g><g fill="#a2ccb8"><rect x="834.90" y="14.5" width="7.2" height="5.6"/><rect x="843.59" y="12.6" width="7.2" height="7.5"/><rect x="852.28" y="8.1" width="7.2" height="12"/><rect x="860.97" y="8.1" width="7.2" height="12"/><rect x="869.66" y="8.1" width="7.2" height="12"/><rect x="878.35" y="15.7" width="7.2" height="4.4"/><rect x="887.04" y="18.8" width="7.2" height="1.3"/><rect x="895.73" y="15.7" width="7.2" height="4.4"/><rect x="904.42" y="8.1" width="7.2" height="12"/><rect x="913.11" y="11.1" width="7.2" height="9"/><rect x="921.80" y="5.1" width="7.2" height="15"/><rect x="930.49" y="8.1" width="7.2" height="12"/></g><rect x="834.9" y="19.1" width="102.8" height="1" fill="#8fb5a3" opacity="0.45"/></svg><span class="k">the <b>second coming</b> meaning</span><div class="cp"></div><span class="g">320</span><span class="l">260</span></div>
<div class="r" style="top:464px"><div class="cb" style="top:6.7px"></div><svg class="t" width="960" height="26"><path d="M32.90,6.40 L34.60,10.96 L39.46,11.17 L35.66,14.20 L36.96,18.88 L32.90,16.20 L28.84,18.88 L30.14,14.20 L26.34,11.17 L31.20,10.96 Z" fill="#fafcfe" stroke="#bcc4cc" stroke-width="1"/><g fill="#d0efe1"><rect x="841.90" y="17.6" width="1.7" height="2.5"/><rect x="850.59" y="17.6" width="1.7" height="2.5"/><rect x="859.28" y="17.6" width="1.7" height="2.5"/><rect x="867.97" y="14.1" width="1.7" height="6"/><rect x="876.66" y="13.1" width="1.7" height="7"/><rect x="885.35" y="8.1" width="1.7" height="12"/><rect x="894.04" y="5.1" width="1.7" height="15"/><rect x="902.73" y="11.1" width="1.7" height="9"/><rect x="911.42" y="11.1" width="1.7" height="9"/><rect x="920.11" y="8.1" width="1.7" height="12"/><rect x="928.80" y="11.1" width="1.7" height="9"/></g><g fill="#a2ccb8"><rect x="834.90" y="17.6" width="7.2" height="2.5"/><rect x="843.59" y="17.6" width="7.2" height="2.5"/><rect x="852.28" y="17.6" width="7.2" height="2.5"/><rect x="860.97" y="14.1" width="7.2" height="6"/><rect x="869.66" y="13.1" width="7.2" height="7"/><rect x="878.35" y="8.1" width="7.2" height="12"/><rect x="887.04" y="5.1" width="7.2" height="15"/><rect x="895.73" y="5.1" width="7.2" height="15"/><rect x="904.42" y="11.1" width="7.2" height="9"/><rect x="913.11" y="8.1" width="7.2" height="12"/><rect x="921.80" y="8.1" width="7.2" height="12"/><rect x="930.49" y="11.1" width="7.2" height="9"/></g><rect x="834.9" y="19.1" width="102.8" height="1" fill="#8fb5a3" opacity="0.45"/></svg><span class="k">broly <b>second coming</b></span><div class="cp"><i class="s" style="width:1.8px"></i></div><span class="g">8,100</span><span class="l">5,400</span></div>
<div class="r" style="top:490px;border-bottom-color:transparent"><div class="cb" style="top:6.7px"></div><svg class="t" width="960" height="26"><path d="M32.90,6.40 L34.60,10.96 L39.46,11.17 L35.66,14.20 L36.96,18.88 L32.90,16.20 L28.84,18.88 L30.14,14.20 L26.34,11.17 L31.20,10.96 Z" fill="#fafcfe" stroke="#bcc4cc" stroke-width="1"/><g fill="#d0efe1"><rect x="841.90" y="13.5" width="1.7" height="6.6"/><rect x="850.59" y="13.5" width="1.7" height="6.6"/><rect x="859.28" y="11.3" width="1.7" height="8.8"/><rect x="867.97" y="15.7" width="1.7" height="4.4"/><rect x="876.66" y="18.5" width="1.7" height="1.6"/><rect x="885.35" y="18.5" width="1.7" height="1.6"/><rect x="894.04" y="18.5" width="1.7" height="1.6"/><rect x="902.73" y="18.5" width="1.7" height="1.6"/><rect x="911.42" y="18.5" width="1.7" height="1.6"/><rect x="920.11" y="18.5" width="1.7" height="1.6"/><rect x="928.80" y="17.6" width="1.7" height="2.5"/></g><g fill="#a2ccb8"><rect x="834.90" y="5.1" width="7.2" height="15"/><rect x="843.59" y="13.5" width="7.2" height="6.6"/><rect x="852.28" y="11.3" width="7.2" height="8.8"/><rect x="860.97" y="11.3" width="7.2" height="8.8"/><rect x="869.66" y="15.7" width="7.2" height="4.4"/><rect x="878.35" y="18.5" width="7.2" height="1.6"/><rect x="887.04" y="17.6" width="7.2" height="2.5"/><rect x="895.73" y="18.5" width="7.2" height="1.6"/><rect x="904.42" y="18.5" width="7.2" height="1.6"/><rect x="913.11" y="18.5" width="7.2" height="1.6"/><rect x="921.80" y="17.6" width="7.2" height="2.5"/><rect x="930.49" y="17.6" width="7.2" height="2.5"/></g><rect x="834.9" y="19.1" width="102.8" height="1" fill="#8fb5a3" opacity="0.45"/></svg><span class="k"><b>second coming</b> trailer</span><div class="cp"></div><span class="g">320</span><span class="l">140</span></div>
</div></body></html>
